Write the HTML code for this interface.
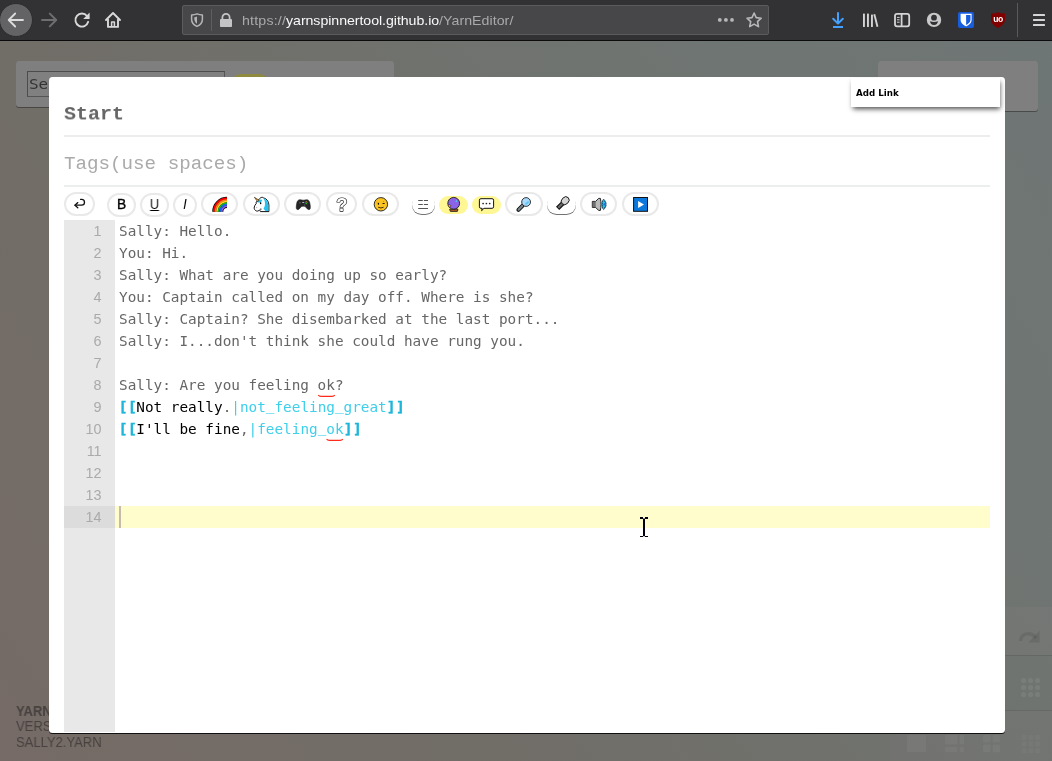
<!DOCTYPE html>
<html lang="en">
<head>
<meta charset="utf-8">
<title>Yarn Editor</title>
<style>
*{box-sizing:border-box;margin:0;padding:0}
html,body{width:1052px;height:761px;overflow:hidden}
body{position:relative;font-family:"Liberation Sans",sans-serif;background:#6f706c}
.abs{position:absolute}
#chrome,#title,#tags,#lines,#menu,#info,#search,.tb{will-change:transform}
/* ---------- browser chrome ---------- */
#chrome{position:absolute;left:0;top:0;width:1052px;height:41px;background:#323234;border-bottom:1px solid #0c0c0d}
#back{position:absolute;left:-1px;top:3px;width:34px;height:34px;border-radius:50%;background:#636365;border:1px solid #2c2c2e}
#urlbar{position:absolute;left:182px;top:5px;width:587px;height:30px;background:#474749;border:1px solid #5b5b5d;border-radius:2px}
#url{position:absolute;left:242px;top:12px;font-size:13px;line-height:18px;color:#a9a9ab;white-space:nowrap;letter-spacing:.04px;transform:scaleX(1.09);transform-origin:0 0}
#url b{font-weight:normal;color:#f9f9fa;letter-spacing:-.05px}
#url i{font-style:normal;letter-spacing:.17px}
/* ---------- page ---------- */
#page{position:absolute;left:0;top:0;width:1052px;height:761px;overflow:hidden;
 background:linear-gradient(56deg,#766b66 0%,#716d67 30%,#6f7572 75%,#6e7675 100%)}
.panel{position:absolute;background:#7f7f7f;border-radius:3px;box-shadow:0 1px 0 rgba(0,0,0,.35)}
#search{position:absolute;left:27px;top:71px;width:198px;height:26px;border:1px solid #555;border-top-color:#4c4c4c;border-left-color:#4c4c4c;background:#808080;
 font-family:"DejaVu Sans Mono","Liberation Mono",monospace;font-size:13.9px;line-height:24px;color:#333;padding-left:1.2px}
#search span{display:inline-block;transform:scaleX(1.15);transform-origin:0 50%}
#info{position:absolute;left:16px;top:702px;font-size:14px;line-height:16px;color:#47423f;white-space:pre;transform:scaleX(.93);transform-origin:0 0}
#info b,#info span{position:absolute;left:0;display:block}
/* ---------- modal ---------- */
#modal{position:absolute;left:49px;top:77px;width:956px;height:656px;background:#fff;border-radius:3.5px;
 box-shadow:0 1px 0 #111;overflow:hidden}
#title{position:absolute;left:64px;top:102.5px;font-family:"Liberation Mono",monospace;font-weight:bold;font-size:20px;line-height:24px;color:#666;white-space:pre;transform:scaleY(.95);transform-origin:0 5px}
#tags{position:absolute;left:64px;top:152px;font-family:"Liberation Mono",monospace;font-size:19.2px;line-height:24px;color:#aaa;white-space:pre}
.hr{position:absolute;left:64px;width:926px;height:2px;background:#eceeed}
/* toolbar buttons */
.btn{position:absolute;top:193px;height:23px;border-radius:12px;border:2px solid #e9e9e9;background:#fff}
.btn.sh{border:0;box-shadow:0 1px .6px rgba(0,0,0,.55)}
.btn.y{border:0;background:#fff694}
.btn svg{position:absolute;left:0;top:0}
.tb{position:absolute;left:-2px;right:-2px;top:-2.5px;height:23px;line-height:23px;text-align:center;color:#000;font-size:13.8px;transform:scaleX(.9)}
.tb.b{-webkit-text-stroke:.35px #000;transform:none}
.tb.u{text-decoration:underline}
.tb.i{font-style:italic}
/* editor */
#gutter{position:absolute;left:64px;top:220px;width:51px;height:512px;background:#e8e8e8}
#gact{position:absolute;left:64px;top:506px;width:51px;height:22px;background:#dcdcdc}
#lact{position:absolute;left:115px;top:506px;width:875px;height:22px;background:#fffdcc}
.ln{position:absolute;left:64px;width:37.6px;text-align:right;font-size:14.4px;line-height:22px;height:22px;color:#aaa;font-family:"Liberation Sans",sans-serif}
.tl{position:absolute;left:119px;height:22px;line-height:22px;font-family:"DejaVu Sans Mono","Liberation Mono",monospace;font-size:14.35px;color:#666;white-space:pre}
.tl .k{color:#1cb6da;font-weight:bold;position:relative;display:inline-block;height:22px;vertical-align:top;transform:scale(1.07,.92);top:.4px;left:-.2px;-webkit-text-stroke:.3px #1cb6da}
.tl .k.r{left:.5px}
.tl u{text-decoration:none;position:relative;top:-2.2px}
.tl .t{color:#000}
.tl .n{color:#3ecfe9}
.sq{position:absolute;height:4px}
#cursor{position:absolute;left:119px;top:506px;width:2px;height:22px;background:#c6baad}
/* context menu */
#menu{position:absolute;left:851px;top:78px;width:149px;height:29px;background:#fff;box-shadow:1px 3px 5px -1px rgba(0,0,0,.7);}
#menu span{position:absolute;left:5px;top:9px;font-family:"DejaVu Sans","Liberation Sans",sans-serif;font-size:8.7px;line-height:13px;font-weight:bold;color:#000}
</style>
</head>
<body>
<div id="page">
  <div class="panel" style="left:16px;top:61px;width:378px;height:46px"></div>
  <div id="search"><span>Search</span></div>
  <div class="abs" style="left:231px;top:74px;width:38px;height:20px;border-radius:10px;background:#8e8a3e"></div>
  <div class="panel" style="left:878px;top:61px;width:160px;height:50px"></div>
  <div class="abs" style="left:1005px;top:607px;width:47px;height:48px;background:rgba(128,124,124,.28)"></div>
  <div class="abs" style="left:1005px;top:655px;width:47px;height:1px;background:rgba(0,0,0,.1)"></div>
  <div class="abs" style="left:1005px;top:710px;width:47px;height:1px;background:rgba(40,0,0,.1)"></div>
  <div class="abs" style="left:890px;top:711px;width:162px;height:50px;background:rgba(128,124,120,.18)"></div>
  <svg class="abs" style="left:880px;top:600px" width="172" height="161" viewBox="880 600 172 161">
   <g fill="none" stroke="rgba(0,0,0,.09)">
    <path d="M1020.5 641 C1021 633 1031 631 1036 638" stroke-width="3.4"/>
   </g>
   <path d="M1039.6 630.6 V642.4 H1028.4 Z" fill="rgba(0,0,0,.09)"/>
   <g fill="rgba(255,255,255,.07)">
    <circle cx="1023.6" cy="680.6" r="2.6"/><circle cx="1030.6" cy="680.6" r="2.6"/><circle cx="1037.6" cy="680.6" r="2.6"/>
    <circle cx="1023.6" cy="687.6" r="2.6"/><circle cx="1030.6" cy="687.6" r="2.6"/><circle cx="1037.6" cy="687.6" r="2.6"/>
    <circle cx="1023.6" cy="694.6" r="2.6"/><circle cx="1030.6" cy="694.6" r="2.6"/><circle cx="1037.6" cy="694.6" r="2.6"/>
   </g>
   <g fill="rgba(255,255,255,.045)">
    <rect x="907" y="735" width="19" height="17" rx="1"/>
    <rect x="945" y="735" width="12.5" height="9.5" rx="1"/><rect x="959.5" y="735" width="4.5" height="9.5" rx="1"/>
    <rect x="945" y="747" width="12.5" height="5" rx="1"/><rect x="959.5" y="747" width="4.5" height="5" rx="1"/>
    <rect x="983" y="735" width="7.6" height="7.6" rx="1.5"/><rect x="992.6" y="735" width="7.6" height="7.6" rx="1.5"/>
    <rect x="983" y="744.6" width="7.6" height="7.6" rx="1.5"/><rect x="992.6" y="744.6" width="7.6" height="7.6" rx="1.5"/>
   </g>
   <g fill="rgba(255,255,255,.03)">
    <rect x="1021.6" y="735" width="5" height="5" rx="1"/><rect x="1028.4" y="735" width="5" height="5" rx="1"/><rect x="1035.2" y="735" width="5" height="5" rx="1"/>
    <rect x="1021.6" y="741.6" width="5" height="5" rx="1"/><rect x="1028.4" y="741.6" width="5" height="5" rx="1"/><rect x="1035.2" y="741.6" width="5" height="5" rx="1"/>
    <rect x="1021.6" y="748.2" width="5" height="5" rx="1"/><rect x="1028.4" y="748.2" width="5" height="5" rx="1"/><rect x="1035.2" y="748.2" width="5" height="5" rx="1"/>
   </g>
  </svg>
  <div id="info"><b style="top:1px">YARN</b><span style="top:16px">VERSION</span><span style="top:32px">SALLY2.YARN</span></div>
</div>
<div id="chrome">
  <div id="back"></div>
  <div id="urlbar"></div>
  <div id="url"><i>https://</i><b>yarnspinnertool.github.io</b>/YarnEditor/</div>
  <svg class="abs" style="left:0;top:0" width="1052" height="40" viewBox="0 0 1052 40">
   <!-- back -->
   <g fill="none" stroke="#dcdcdd" stroke-width="1.8" stroke-linecap="round" stroke-linejoin="round">
    <path d="M9 20 H23 M15.2 13.5 L8.7 20 L15.2 26.5"/>
   </g>
   <!-- forward -->
   <g fill="none" stroke="#6e6e70" stroke-width="2" stroke-linecap="round" stroke-linejoin="round">
    <path d="M42 20 H56 M49.8 13.6 L56.2 20 L49.8 26.4"/>
   </g>
   <!-- reload -->
   <g fill="none" stroke="#d9d9da" stroke-width="1.9" stroke-linecap="round" stroke-linejoin="round">
    <path d="M87 16 A6.5 6.5 0 1 0 88.2 21.8"/>
   </g>
   <path d="M89.6 12.6 V19 H83.2 Z" fill="#d9d9da"/>
   <!-- home -->
   <g fill="none" stroke="#d9d9da" stroke-width="1.9" stroke-linejoin="round" stroke-linecap="round">
    <path d="M106 20 L113 13 L120 20"/>
    <path d="M108 19.6 V26.9 H118 V19.6"/>
    <path d="M111.6 26.6 V22 H114.4 V26.6" stroke-width="1.5"/>
   </g>
   <!-- shield -->
   <g fill="none" stroke="#b4b4b6" stroke-width="1.5" stroke-linejoin="round">
    <path d="M197 13.9 C198.8 14.5 200.6 14.8 202.4 14.9 V19.2 C202.4 22.6 200.2 25 197 26.4 C193.8 25 191.6 22.6 191.6 19.2 V14.9 C193.4 14.8 195.2 14.5 197 13.9 Z"/>
   </g>
   <path d="M197 16.6 C196 17.1 195.1 17.3 194.2 17.4 C194.2 20 195 22.4 197 23.8 Z" fill="#b4b4b6"/>
   <rect x="211" y="9" width="1" height="22" fill="#5e5e60"/>
   <!-- lock -->
   <g>
    <path d="M222.4 19.6 V17.4 A3.6 3.6 0 0 1 229.6 17.4 V19.6" fill="none" stroke="#c4c4c6" stroke-width="1.8"/>
    <rect x="220" y="19" width="12" height="8" rx=".8" fill="#c4c4c6"/>
   </g>
   <!-- dots -->
   <g fill="#b8b8ba"><circle cx="719.8" cy="19.9" r="1.9"/><circle cx="725.9" cy="19.9" r="1.9"/><circle cx="732" cy="19.9" r="1.9"/></g>
   <!-- star -->
   <path d="M754.1 13 L756.2 17.6 L761.2 18.2 L757.5 21.6 L758.5 26.6 L754.1 24.1 L749.7 26.6 L750.7 21.6 L747 18.2 L752 17.6 Z" fill="none" stroke="#b8b8ba" stroke-width="1.6" stroke-linejoin="round"/>
   <!-- download -->
   <g fill="none" stroke="#45a1ff" stroke-width="2" stroke-linecap="round" stroke-linejoin="round">
    <path d="M838 13 V23.4 M833.2 18.8 L838 23.6 L842.8 18.8"/>
    <path d="M833 27 H843" stroke-linecap="butt"/>
   </g>
   <!-- library -->
   <g fill="#d4d4d5">
    <rect x="863" y="13.4" width="1.9" height="13.6" rx=".6"/>
    <rect x="867" y="13.4" width="1.9" height="13.6" rx=".6"/>
    <rect x="871" y="14.4" width="1.9" height="12.6" rx=".6"/>
    <path d="M873.4 14.6 L875.2 14 L878.4 26.4 L876.6 27 Z"/>
   </g>
   <!-- sidebar -->
   <g fill="none" stroke="#d4d4d5" stroke-width="1.8">
    <rect x="895" y="13.9" width="14.2" height="12.4" rx="2"/>
    <path d="M901.6 14 V26.2"/>
    <path d="M897 17.4 H899.6 M897 19.8 H899.6 M897 22.2 H899.6" stroke-width="1"/>
   </g>
   <!-- account -->
   <g>
    <circle cx="934" cy="19.9" r="7.2" fill="#c9c9ca"/>
    <circle cx="934" cy="17.7" r="2.9" fill="#323234"/>
    <path d="M930 21.3 Q934 22.9 938 21.3 Q937.6 25 934 25 Q930.4 25 930 21.3 Z" fill="#323234"/>
   </g>
   <!-- bitwarden -->
   <g>
    <rect x="958" y="12" width="16" height="16" rx="2" fill="#175ddc"/>
    <path d="M960.6 13.8 H971.6 V19.8 C971.6 23 969 25 966.1 26.4 C963.2 25 960.6 23 960.6 19.8 Z" fill="#fff"/>
    <path d="M966.1 15 H970.5 V19.8 C970.5 22.2 968.4 23.9 966.1 25.1 Z" fill="#175ddc"/>
   </g>
   <!-- ublock -->
   <g>
    <path d="M998 12 C999.4 13 1002 13.5 1005 13.6 V19.6 C1005 23.6 1001.6 26.2 998 28 C994.4 26.2 991 23.6 991 19.6 V13.6 C994 13.5 996.6 13 998 12 Z" fill="#800000"/>
    <text x="998.1" y="22" text-anchor="middle" font-family="Liberation Sans, sans-serif" font-weight="bold" font-size="8.6" fill="#fff" letter-spacing="-.4">uo</text>
   </g>
   <rect x="1017" y="3" width="1" height="34" fill="#5a5a5c"/>
   <!-- hamburger -->
   <g fill="#d4d4d5">
    <rect x="1033" y="14" width="12" height="2" rx=".6"/>
    <rect x="1033" y="19" width="12" height="2" rx=".6"/>
    <rect x="1033" y="24" width="12" height="2" rx=".6"/>
   </g>
  </svg>
</div>
<div id="modal"></div>
<div id="title">Start</div>
<div class="hr" style="top:135px"></div>
<div id="tags">Tags(use spaces)</div>
<div class="hr" style="top:185px"></div>
<div id="toolbar">
<div class="btn " style="left:64px;top:192px;width:31px;height:24px"></div>
<div class="btn " style="left:107px;top:193px;width:29px;height:23.5px"><span class="tb b">B</span></div>
<div class="btn " style="left:140px;top:193px;width:29px;height:23.5px"><span class="tb u">U</span></div>
<div class="btn " style="left:173px;top:193px;width:24px;height:23.5px"><span class="tb i">I</span></div>
<div class="btn " style="left:201.4px;top:192px;width:37.1px;height:24px"></div>
<div class="btn " style="left:242.8px;top:192px;width:37.1px;height:24px"></div>
<div class="btn " style="left:284.2px;top:192px;width:37.1px;height:24px"></div>
<div class="btn " style="left:326px;top:192px;width:31.4px;height:24px"></div>
<div class="btn " style="left:362.1px;top:192px;width:37.4px;height:24px"></div>
<div class="btn sh" style="left:412px;top:195px;width:23px;height:19px"></div>
<div class="btn y" style="left:439px;top:196px;width:29px;height:17.5px"></div>
<div class="btn y" style="left:472px;top:196px;width:29px;height:17.5px"></div>
<div class="btn " style="left:505.3px;top:192px;width:37.5px;height:24px"></div>
<div class="btn sh" style="left:547px;top:195px;width:29px;height:19px"></div>
<div class="btn " style="left:580.3px;top:192px;width:37px;height:24px"></div>
<div class="btn " style="left:622.3px;top:192px;width:36.5px;height:24px"></div>
<svg class="abs" style="left:0;top:186px" width="1052" height="36" viewBox="0 186 1052 36">
 <!-- return arrow -->
 <g fill="none" stroke="#111" stroke-width="1.3" stroke-linecap="round" stroke-linejoin="round">
  <path d="M75 205.2 H81.6 a2.9 2.9 0 0 0 0 -5.8 H80.6"/>
  <path d="M77.8 202.6 L75 205.2 L77.8 207.8" />
 </g>
 <!-- rainbow -->
 <g id="rainbow">
  <clipPath id="rbc"><rect x="210" y="195" width="17" height="16.8"/></clipPath>
  <g clip-path="url(#rbc)" fill="none">
   <circle cx="227" cy="211.6" r="9.2" stroke="#111" stroke-width="11.2"/>
   <circle cx="227" cy="211.6" r="13.1" stroke="#f00" stroke-width="1.8"/>
   <circle cx="227" cy="211.6" r="11.5" stroke="#ff7a1a" stroke-width="1.6"/>
   <circle cx="227" cy="211.6" r="10" stroke="#ffd21f" stroke-width="1.5"/>
   <circle cx="227" cy="211.6" r="8.5" stroke="#21b321" stroke-width="1.6"/>
   <circle cx="227" cy="211.6" r="6.9" stroke="#1565f0" stroke-width="1.7"/>
   <circle cx="227" cy="211.6" r="5.3" stroke="#8a5cf0" stroke-width="1.5"/>
  </g>
 </g>
 <!-- unicorn -->
 <g id="unicorn" stroke-linejoin="round">
  <path d="M259.6 198.6 C261 197.2 262.6 196.9 263.6 197.9 C266.6 198.4 268.9 201.6 268.9 205 V211.6 H260.4 L259.6 209.8 C258.8 211.2 256.6 211.6 255.4 210.4 C254 209.4 253.8 207.4 254.8 205.6 L256.3 203.4 L256 202.2 L257.6 201 Z" fill="#fff" stroke="#111" stroke-width="1"/>
  <path d="M263.4 198.3 C266.4 199 268.4 201.8 268.4 205 V211.1 H265.6 C264.4 210 263.4 209 263.7 208 C264.8 206.6 265.2 204.4 264.9 202.4 C264.7 200.6 264 199.2 263.4 198.3 Z" fill="#25c1f1"/>
  <path d="M258.4 200.4 C259.8 199.2 261.4 199.2 262.2 200 L261 202.4 L257.4 202.6 Z" fill="#25c1f1"/>
  <path d="M254.4 197.3 L258.9 200.2 L257.7 201.8 Z" fill="#f9a51a" stroke="#3a2a10" stroke-width=".7"/>
  <ellipse cx="260.6" cy="203.3" rx=".75" ry="1" fill="#000"/>
  <circle cx="256.7" cy="207.6" r=".6" fill="#aaa"/>
  <path d="M260 209.6 L261 208 L261.6 209.8 Z" fill="#111"/>
 </g>
 <!-- gamepad -->
 <g id="gamepad" transform="translate(303.4 204.6) scale(.94) translate(-303.4 -204.6)">
  <path d="M298.6 199.6 C300.4 199.1 301.6 199.9 303.3 199.9 C305 199.9 306.2 199.1 308 199.6 C309.3 200 309.9 201.4 310.2 203 C310.7 205.2 311 207.4 310.6 208.9 C310.2 210.2 308.6 210.2 307.7 209.3 L305.6 206.9 C304.4 206.2 302.2 206.2 301 206.9 L298.9 209.3 C298 210.2 296.4 210.2 296 208.9 C295.6 207.4 295.9 205.2 296.4 203 C296.7 201.4 297.3 200 298.6 199.6 Z" fill="#262626" stroke="#111" stroke-width=".6"/>
  <circle cx="299.7" cy="202.7" r="1.1" fill="#4a4a4a"/>
  <rect x="302.2" y="202" width="1.9" height="1" rx=".4" fill="#eee"/>
  <circle cx="305.3" cy="202.5" r=".7" fill="#2a6fd6"/>
  <circle cx="306.5" cy="203.5" r=".8" fill="#1fc81f"/>
  <circle cx="307.6" cy="202.4" r=".7" fill="#d62222"/>
  <circle cx="306.4" cy="201.5" r=".6" fill="#c79a3a"/>
  <circle cx="304.6" cy="205" r=".8" fill="#4a4f55"/>
 </g>
 <!-- question -->
 <text x="341.9" y="210.8" text-anchor="middle" font-family="Liberation Sans, sans-serif" font-weight="bold" font-size="18.5" fill="#fff" stroke="#111" stroke-width="1.25" paint-order="stroke fill" stroke-linejoin="round">?</text>
 <!-- wink -->
 <g id="wink">
  <circle cx="380.9" cy="204.3" r="6.7" fill="#fcc423" stroke="#1a1a1a" stroke-width=".9"/>
  <ellipse cx="378.4" cy="203.8" rx=".65" ry="1" fill="#000"/>
  <path d="M382.6 203.5 H384.6" stroke="#000" stroke-width=".9" fill="none"/>
  <path d="M378.2 207.2 Q380.9 208.8 383.6 207.2" stroke="#3a2a10" stroke-width="1" fill="none"/>
  <circle cx="377" cy="202" r=".5" fill="#f2701c"/>
  <circle cx="383.6" cy="201.4" r=".5" fill="#f2701c"/>
 </g>
 <!-- trigram -->
 <g stroke="#555" stroke-width="1" fill="none">
  <path d="M418.2 200.5 H422.8 M423.9 200.5 H428"/>
  <path d="M418.2 204.5 H422.8 M423.9 204.5 H428"/>
  <path d="M418.2 208.5 H428"/>
 </g>
 <!-- crystal ball -->
 <g id="ball">
  <path d="M449.6 209.2 H458 L457.4 211.4 H450.4 Z" fill="#b5561f" stroke="#1a1a1a" stroke-width=".8"/>
  <circle cx="453.7" cy="203.3" r="5.9" fill="#8a63e8" stroke="#1a1a1a" stroke-width=".9"/>
  <path d="M455.2 201.6 L456.9 199.9 L457.2 202 Z" fill="#49d8f5"/>
  <path d="M448 205.8 L449.6 204.2 L450.9 205.9 L449.6 207.2 Z" fill="#ffb01f" stroke="#1a1a1a" stroke-width=".5"/>
 </g>
 <!-- speech bubble -->
 <g id="speech">
  <path d="M480.9 198.7 H492.1 A1.5 1.5 0 0 1 493.6 200.2 V206.8 A1.5 1.5 0 0 1 492.1 208.3 H484 L481.6 210.7 L482.2 208.3 H480.9 A1.5 1.5 0 0 1 479.4 206.8 V200.2 A1.5 1.5 0 0 1 480.9 198.7 Z" fill="#fff" stroke="#111" stroke-width="1" stroke-linejoin="round"/>
  <circle cx="483.1" cy="203.5" r=".85" fill="#222"/>
  <circle cx="486.4" cy="203.5" r=".85" fill="#222"/>
  <circle cx="489.7" cy="203.5" r=".85" fill="#222"/>
 </g>
 <!-- magnifier -->
 <g id="mag">
  <path d="M522.6 205.6 L518.4 209.9" stroke="#111" stroke-width="4" stroke-linecap="round" fill="none"/>
  <path d="M522.6 205.6 L518.6 209.7" stroke="#78878a" stroke-width="2.2" stroke-linecap="round" fill="none"/>
  <circle cx="526.1" cy="202" r="4.4" fill="#a9d9fb" stroke="#222" stroke-width=".9"/>
  <path d="M525.5 204.4 L528.6 201.6" stroke="#5ac4f6" stroke-width="1.6" fill="none"/>
 </g>
 <!-- mic -->
 <g id="mic">
  <path d="M563.2 202.8 L557.6 208.4" stroke="#111" stroke-width="4.6" stroke-linecap="butt" fill="none"/>
  <path d="M562.6 203.4 L558.2 207.8" stroke="#6a6a6a" stroke-width="2.2" fill="none"/>
  <ellipse cx="565.2" cy="200.7" rx="4.3" ry="3.5" transform="rotate(-45 565.2 200.7)" fill="#d4d4d4" stroke="#111" stroke-width=".9"/>
 </g>
 <!-- speaker -->
 <g id="spk">
  <path d="M592.3 201.4 H595.6 L598.6 198.4 H600.4 C601.2 202 601.2 206.8 600.4 210.4 H598.6 L595.6 207.4 H592.3 Z" fill="#b9b9b9" stroke="#111" stroke-width=".9" stroke-linejoin="round"/>
  <rect x="592.7" y="201.8" width="3" height="5.2" fill="#6e6e6e"/>
  <path d="M603.6 199.2 C606.8 201.6 606.8 207.2 603.6 209.6 C601.4 207.4 601.4 201.4 603.6 199.2 Z" fill="#22c3ee" stroke="#0a2a4a" stroke-width=".7"/>
  <circle cx="604.6" cy="204.4" r="1.2" fill="#1f6fd6"/>
  <g fill="#0b1c2c"><circle cx="602.6" cy="201.2" r=".45"/><circle cx="604.6" cy="201.6" r=".45"/><circle cx="602.4" cy="203.4" r=".45"/><circle cx="602.4" cy="205.6" r=".45"/><circle cx="602.6" cy="207.6" r=".45"/><circle cx="604.6" cy="207.2" r=".45"/><circle cx="606" cy="203" r=".4"/><circle cx="606" cy="205.8" r=".4"/></g>
 </g>
 <!-- play -->
 <g id="play">
  <rect x="633.6" y="197.5" width="13.9" height="13.8" fill="#0a78dc" stroke="#111" stroke-width="1"/>
  <path d="M638.1 201.1 L644 204.5 L638.1 207.9 Z" fill="#fff"/>
 </g>
</svg>
</div>
<div id="gutter"></div>
<div id="gact"></div>
<div id="lact"></div>
<div id="lines">
<div class="ln" style="top:220px">1</div>
<div class="tl" style="top:220px">Sally: Hello.</div>
<div class="ln" style="top:242px">2</div>
<div class="tl" style="top:242px">You: Hi.</div>
<div class="ln" style="top:264px">3</div>
<div class="tl" style="top:264px">Sally: What are you doing up so early?</div>
<div class="ln" style="top:286px">4</div>
<div class="tl" style="top:286px">You: Captain called on my day off. Where is she?</div>
<div class="ln" style="top:308px">5</div>
<div class="tl" style="top:308px">Sally: Captain? She disembarked at the last port...</div>
<div class="ln" style="top:330px">6</div>
<div class="tl" style="top:330px">Sally: I...don't think she could have rung you.</div>
<div class="ln" style="top:352px">7</div>
<div class="ln" style="top:374px">8</div>
<div class="tl" style="top:374px">Sally: Are you feeling ok?</div>
<div class="ln" style="top:396px">9</div>
<div class="tl" style="top:396px"><span class="k">[[</span><span class="t">Not really</span>.<span class="n">|not<u>_</u>feeling<u>_</u>great</span><span class="k r">]]</span></div>
<div class="ln" style="top:418px">10</div>
<div class="tl" style="top:418px"><span class="k">[[</span><span class="t">I'll be fine</span>,<span class="n">|feeling<u>_</u>ok</span><span class="k r">]]</span></div>
<div class="ln" style="top:440px">11</div>
<div class="ln" style="top:462px">12</div>
<div class="ln" style="top:484px">13</div>
<div class="ln" style="top:506px">14</div>
</div>
<svg class="abs" style="left:310px;top:390px" width="40" height="56" viewBox="310 390 40 56">
 <path d="M318.2 395 Q319 396.4 321 396.4 H332 Q334 396.4 334.8 395" fill="none" stroke="#ff2a1a" stroke-width="1.1"/>
 <path d="M326.6 439 Q327.4 440.4 329.4 440.4 H340 Q342 440.4 342.8 439" fill="none" stroke="#ff2a1a" stroke-width="1.1"/>
</svg>
<div id="cursor"></div>
<svg class="abs" style="left:638px;top:515px" width="12" height="24" viewBox="638 515 12 24">
 <path d="M640 517 H643 V519 H640 Z M645 517 H648 V519 H645 Z M643 518.6 H645 V536.2 H643 Z M640 536 H643 V537 H640 Z M645 536 H648 V537 H645 Z" fill="#00000f"/>
</svg>
<div id="menu"><span>Add Link</span></div>
</body>
</html>
